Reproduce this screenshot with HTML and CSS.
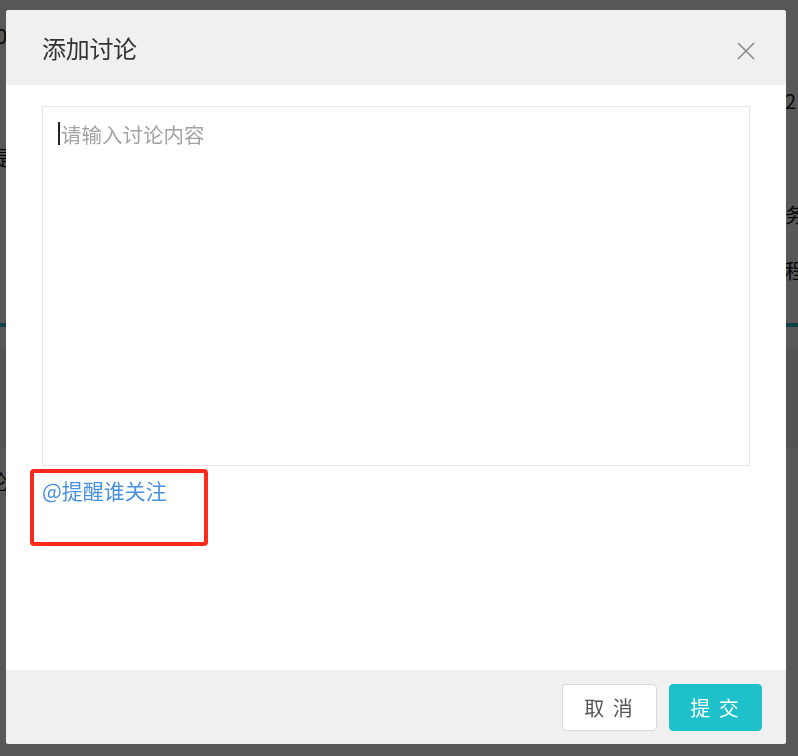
FILE: index.html
```html
<!DOCTYPE html>
<html lang="zh">
<head>
<meta charset="utf-8">
<title>添加讨论</title>
<link rel="stylesheet" href="styles.css">
</head>
<body>
<div class="page">
  <div class="page-frag f1">0</div>
  <div class="page-frag f2">2</div>
  <div class="page-frag f3">提</div>
  <div class="page-frag f4">务</div>
  <div class="page-frag f5">程</div>
  <div class="page-line"></div>
  <div class="page-band"></div>
  <div class="page-frag f6">论</div>
</div>
<div class="mask"></div>
<div class="modal">
  <div class="modal-header">
    <h2 class="modal-title">添加讨论</h2>
    <button class="modal-close" aria-label="关闭">
      <svg width="20" height="20" viewBox="0 0 20 20"><path d="M2 2 L18 18 M18 2 L2 18" stroke="#8a8a8a" stroke-width="1.6" fill="none"/></svg>
    </button>
  </div>
  <div class="modal-body">
    <div class="textarea">
      <span class="caret"></span><span class="placeholder">请输入讨论内容</span>
    </div>
    <div class="mention-wrap">
      <a class="mention">@提醒谁关注</a>
      <div class="annot"></div>
    </div>
  </div>
  <div class="modal-footer">
    <button class="btn btn-cancel">取 消</button>
    <button class="btn btn-submit">提 交</button>
  </div>
</div>
</body>
</html>
```
FILE: styles.css
```css
html, body {
  margin: 0;
  padding: 0;
  width: 798px;
  height: 756px;
  overflow: hidden;
  font-family: "Noto Sans CJK SC", "Noto Sans", sans-serif;
  background: #ffffff;
}
.page {
  position: relative;
  width: 798px;
  height: 756px;
  background: #ffffff;
}
.page-frag {
  position: absolute;
  font-size: 20px;
  color: #111;
  line-height: 1;
  white-space: nowrap;
}
.f1 { left: -4px; top: 26px; }
.f2 { left: 785px; top: 91px; }
.f3 { left: -10px; top: 148px; }
.f4 { left: 785px; top: 205px; }
.f5 { left: 785px; top: 261px; }
.f6 { left: -12px; top: 472px; }
.page-line {
  position: absolute;
  left: 0; right: 0;
  top: 323px;
  height: 4px;
  background: #2bbcc4;
}
.page-band {
  position: absolute;
  left: 0; right: 0;
  top: 348px;
  height: 100px;
  background: #f2f2f2;
}
.mask {
  position: fixed;
  inset: 0;
  background: rgba(0, 0, 0, 0.655);
}
.modal {
  position: absolute;
  left: 6px;
  top: 10px;
  width: 780px;
  height: 734px;
  background: #ffffff;
  border-radius: 3px;
  display: flex;
  flex-direction: column;
  overflow: hidden;
}
.modal-header {
  height: 75px;
  flex: none;
  background: #f0f0f0;
  display: flex;
  align-items: center;
  justify-content: space-between;
  padding: 0 30px 0 36px;
}
.modal-title {
  margin: 0;
  font-size: 24px;
  font-weight: normal;
  color: #333333;
  letter-spacing: -0.3px;
}
.modal-close {
  background: none;
  border: 0;
  padding: 0;
  width: 20px;
  height: 20px;
  position: relative;
  top: 3px;
  cursor: pointer;
}
.modal-body {
  flex: 1;
  padding: 21px 36px 0 36px;
}
.textarea {
  box-sizing: border-box;
  width: 708px;
  height: 360px;
  border: 1px solid #e6e6e6;
  padding: 14px 15px;
  display: flex;
  align-items: flex-start;
}
.caret {
  width: 2px;
  height: 23px;
  background: #222;
  margin-top: 1px;
}
.placeholder {
  font-size: 20.5px;
  line-height: 26px;
  color: #a3a3a3;
  margin-left: 1px;
}
.mention-wrap {
  position: relative;
  padding-top: 10px;
}
.mention {
  font-size: 21px;
  line-height: 28px;
  color: #4a90e2;
  cursor: pointer;
}
.annot {
  position: absolute;
  left: -12px;
  top: 3px;
  width: 178px;
  height: 77px;
  box-sizing: border-box;
  border: 4px solid #ff2a1a;
  border-radius: 4px;
}
.modal-footer {
  height: 74px;
  flex: none;
  background: #f0f0f0;
  display: flex;
  align-items: flex-start;
  justify-content: flex-end;
  gap: 12px;
  padding: 14px 24px 0 0;
  box-sizing: border-box;
}
.btn {
  width: 95px;
  height: 47px;
  border-radius: 4px;
  font-family: "Noto Sans CJK SC", sans-serif;
  font-size: 20px;
  letter-spacing: 2px;
  cursor: pointer;
}
.btn-cancel {
  background: #ffffff;
  border: 1px solid #d9d9d9;
  color: #555555;
}
.btn-submit {
  width: 93px;
  background: #1ec1ca;
  border: 1px solid #1ec1ca;
  color: #ffffff;
}
```
